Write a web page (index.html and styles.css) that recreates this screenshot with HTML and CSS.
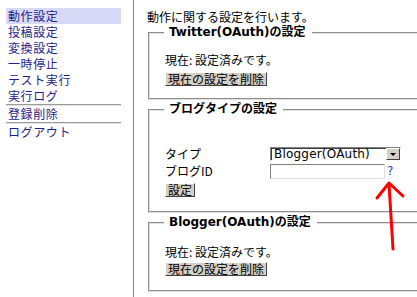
FILE: index.html
```html
<!DOCTYPE html>
<html lang="ja">
<head>
    <meta charset="UTF-8">
    <title>動作設定</title>
    <link rel="stylesheet" href="styles.css">
</head>
<body>
    <div class="page">
        <div class="sidebar">
            <a class="menu-item active" href="#">動作設定</a>
            <a class="menu-item" href="#">投稿設定</a>
            <a class="menu-item" href="#">変換設定</a>
            <a class="menu-item" href="#">一時停止</a>
            <a class="menu-item" href="#">テスト実行</a>
            <a class="menu-item" href="#">実行ログ</a>
            <div class="menu-sep"></div>
            <a class="menu-item" href="#">登録削除</a>
            <div class="menu-sep"></div>
            <a class="menu-item" href="#">ログアウト</a>
        </div>

        <div class="content">
            <div class="intro">動作に関する設定を行います。</div>

            <fieldset class="box box-twitter">
                <legend>Twitter(OAuth)の設定</legend>
                <div class="status">現在: 設定済みです。</div>
                <button class="btn">現在の設定を削除</button>
            </fieldset>

            <fieldset class="box box-type">
                <legend>ブログタイプの設定</legend>
                <div class="form-grid">
                    <label>タイプ</label>
                    <div class="select-box">
                        <span class="select-value">Blogger(OAuth)</span>
                        <span class="select-arrow"></span>
                    </div>
                    <span></span>
                    <label>ブログID</label>
                    <input class="text-input" type="text">
                    <a class="help" href="#">?</a>
                </div>
                <button class="btn">設定</button>
            </fieldset>

            <fieldset class="box box-blogger">
                <legend>Blogger(OAuth)の設定</legend>
                <div class="status">現在: 設定済みです。</div>
                <button class="btn">現在の設定を削除</button>
            </fieldset>
        </div>
    </div>

    <!-- 注釈の矢印 -->
    <svg class="arrow" width="40" height="80" viewBox="0 0 40 80">
        <path d="M19 8 L23 73" stroke="#ff0000" stroke-width="3" fill="none" stroke-linecap="round"/>
        <path d="M7 22 L19 7 L33 20" stroke="#ff0000" stroke-width="3" fill="none" stroke-linecap="round" stroke-linejoin="round"/>
    </svg>
</body>
</html>
```

FILE: styles.css
```css
* {
    box-sizing: border-box;
}

html, body {
    margin: 0;
    padding: 0;
    overflow: hidden;
}

body {
    font-family: "Noto Sans CJK JP", sans-serif;
    font-size: 12px;
    line-height: 16px;
    color: #000;
    background: #fff;
}

.page {
    display: flex;
    min-height: 100vh;
}

.sidebar {
    width: 134px;
    flex-shrink: 0;
    padding: 8px 12px 0 6px;
    border-right: 1px solid #808080;
}

.menu-item {
    display: block;
    height: 16px;
    padding-left: 2px;
    color: #1e1e8c;
    text-decoration: none;
    letter-spacing: 0.6px;
}

.menu-item.active {
    background: #d6daf6;
}

.menu-sep {
    border-top: 1px solid #999;
    border-bottom: 1px solid #e4e4e4;
}

.content {
    flex: 1;
    padding: 9px 0 0 13px;
}

.intro {
    height: 16px;
}

.box {
    width: 340px;
    margin: 0 0 2px 1px;
    padding: 12px 0 12px 15px;
    border: 2px groove #e0e0e0;
    min-width: 0;
}

.box legend {
    padding: 0 6px 0 5px;
    margin-left: -1px;
    font-family: "DejaVu Sans", "Noto Sans CJK JP", sans-serif;
    font-weight: bold;
    font-size: 12px;
    line-height: 15px;
}

.box-twitter .status {
    margin-bottom: 4px;
}

.box-type {
    padding-top: 30px;
    padding-bottom: 14px;
}

.box-blogger {
    padding-top: 14px;
    padding-bottom: 14px;
}

.box-blogger .status {
    margin-bottom: 2px;
}

.status {
    height: 16px;
}

.btn {
    display: block;
    height: 14px;
    margin: 0;
    padding: 0 2px;
    font-family: inherit;
    font-size: 12px;
    line-height: 12px;
    color: #000;
    background: #d4d0c8;
    border: 1px solid;
    border-color: #fff #404040 #404040 #fff;
    border-radius: 0;
}

.form-grid {
    display: grid;
    grid-template-columns: 105px 131px auto;
    row-gap: 2px;
    align-items: center;
    margin-bottom: 4px;
}

.form-grid label {
    line-height: 14px;
}

.select-box {
    display: flex;
    height: 14px;
    border: 1px solid;
    border-color: #808080 #fff #fff #808080;
    background: #fff;
    box-shadow: inset 1px 1px 0 #404040;
}

.select-value {
    flex: 1;
    padding-left: 3px;
    font-family: "DejaVu Sans", sans-serif;
    font-size: 12px;
    line-height: 12px;
    letter-spacing: 0.2px;
}

.select-arrow {
    display: flex;
    align-items: center;
    justify-content: center;
    width: 14px;
    background: #d4d0c8;
    border: 1px solid;
    border-color: #fff #404040 #404040 #fff;
}

.select-arrow::after {
    content: "";
    border-left: 3px solid transparent;
    border-right: 3px solid transparent;
    border-top: 3px solid #000;
}

.text-input {
    width: 115px;
    height: 15px;
    margin: 0;
    padding: 0 2px;
    border: 1px solid;
    border-color: #808080 #e0e0e0 #e0e0e0 #808080;
    font-size: 12px;
}

.help {
    margin-left: -14px;
    color: #3a3aa8;
    text-decoration: none;
    font-family: "DejaVu Sans", sans-serif;
    font-size: 12px;
}

.arrow {
    position: absolute;
    left: 370px;
    top: 176px;
}
```
